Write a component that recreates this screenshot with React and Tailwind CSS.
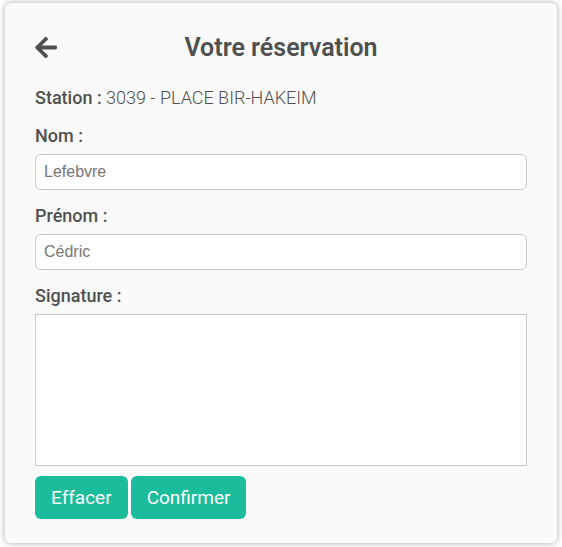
import { FaArrowLeft } from "react-icons/fa";

function Field({ id, label, placeholder }) {
  return (
    <div className="flex flex-col gap-2">
      <label htmlFor={id} className="text-lg leading-5 font-medium">
        {label}
      </label>
      <input
        id={id}
        type="text"
        placeholder={placeholder}
        className="h-9 w-full rounded-md border border-[#c8c8c8] bg-white px-2 font-['Liberation_Sans',Arial,sans-serif] text-base placeholder:text-[#757575]"
      />
    </div>
  );
}

function ActionButton({ children }) {
  return (
    <button
      type="button"
      className="rounded-md bg-[#1abc9c] px-4 py-[10px] text-[19px] leading-[23px] text-white"
    >
      {children}
    </button>
  );
}

export default function App() {
  return (
    <main className="bg-white px-[5px] pt-[3px] pb-1 font-[Roboto,sans-serif] text-[#505050]">
      <section className="rounded-md bg-[#fafafa] px-[30px] pt-[30px] pb-6 shadow-[0_0_6px_rgba(0,0,0,0.35)]">
        <header className="grid grid-cols-[24px_1fr_24px] items-center">
          <button type="button" aria-label="Retour">
            <FaArrowLeft className="h-[25px] w-[22px]" />
          </button>
          <h1 className="text-center text-[25px] leading-[29px] font-semibold">
            Votre réservation
          </h1>
        </header>
        <form className="mt-[26px] flex flex-col gap-4">
          <p className="text-lg leading-5 font-light">
            <strong className="font-medium">Station :</strong> 3039 - PLACE
            BIR-HAKEIM
          </p>
          <div className="mt-0.5">
            <Field id="nom" label="Nom :" placeholder="Lefebvre" />
          </div>
          <Field id="prenom" label="Prénom :" placeholder="Cédric" />
          <div className="flex flex-col gap-2">
            <h2 className="text-lg leading-5 font-medium">Signature :</h2>
            <canvas
              aria-label="Signature"
              className="block h-38 w-full border border-[#c8c8c8] bg-white"
            />
          </div>
          <div className="-mt-[6px] flex gap-[3px]">
            <ActionButton>Effacer</ActionButton>
            <ActionButton>Confirmer</ActionButton>
          </div>
        </form>
      </section>
    </main>
  );
}
